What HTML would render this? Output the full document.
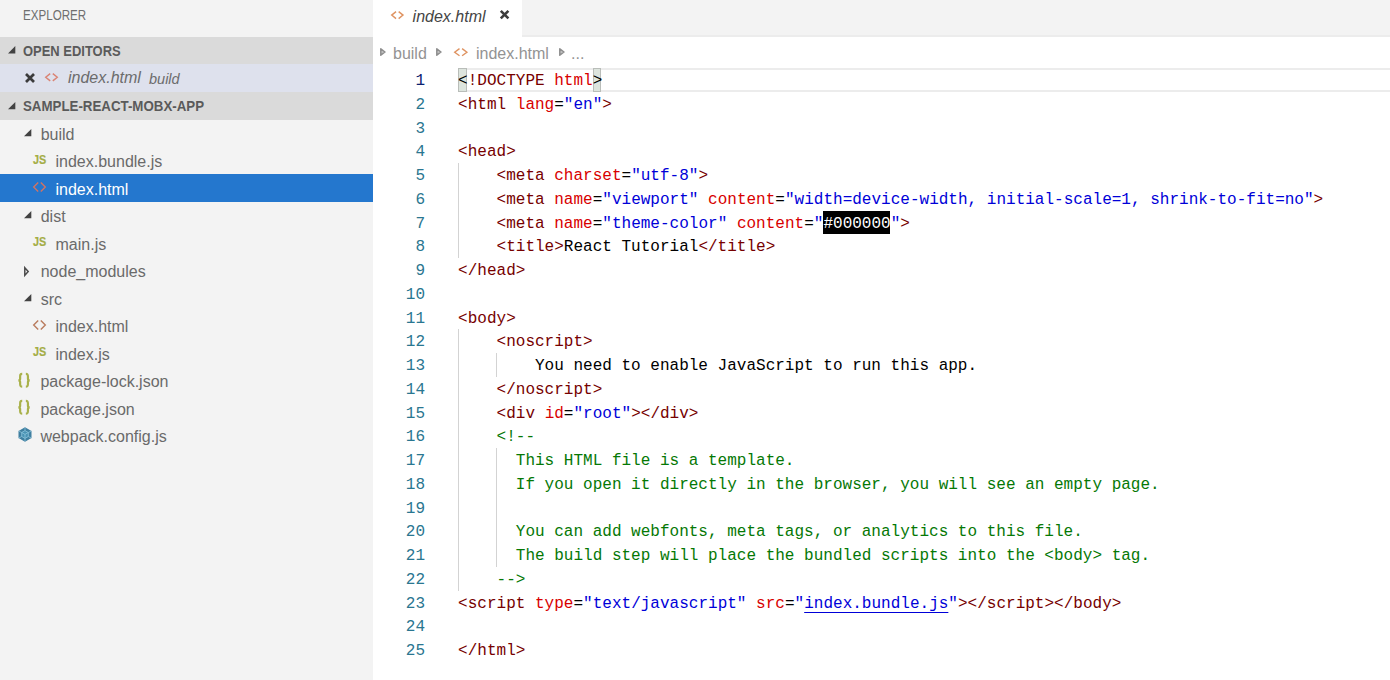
<!DOCTYPE html>
<html><head><meta charset="utf-8">
<style>
*{margin:0;padding:0;box-sizing:border-box}
html,body{width:1390px;height:680px;overflow:hidden;background:#fff;font-family:"Liberation Sans",sans-serif}
.abs{position:absolute}
svg{position:absolute;overflow:visible}
#side{position:absolute;left:0;top:0;width:373px;height:680px;background:#f3f3f3}
.title{left:23px;top:8px;font-size:13.8px;color:#6f6f6f;transform:scaleX(0.84);transform-origin:0 0}
.hdr{left:0;width:373px;background:#dadada}
.hdr span{position:absolute;left:23px;font-size:14px;font-weight:bold;color:#5a5a5a;transform-origin:0 0;white-space:nowrap}
.row{left:0;width:373px;height:27.5px}
.row .t{position:absolute;top:6.2px;font-size:16px;color:#6a6a6a;white-space:nowrap}
.sel{background:#2477ce;margin-top:-0.6px;height:27.85px!important}
.sel .t{margin-top:0.6px}
.sel svg{margin-top:0.6px}
.sel .t{color:#fff}
.jsi{font-size:13.6px;font-weight:bold;color:#a4ad46;transform:scaleX(0.8);transform-origin:0 0;-webkit-text-stroke:0.2px #a4ad46}
#tabs{position:absolute;left:373px;top:0;width:1017px;height:37px;background:#f3f3f3;border-bottom:2px solid #ececec}
#tab{position:absolute;left:373px;top:0;width:149px;height:37px;background:#fff}
.code{position:absolute;left:458.1px;font-family:"Liberation Mono",monospace;font-size:16.03px;white-space:pre;color:#000;height:23.75px;line-height:23.75px}
.ln{position:absolute;left:380px;width:45px;text-align:right;font-family:"Liberation Mono",monospace;font-size:16px;color:#2a7690;height:23.75px;line-height:23.75px}
.ln.act{color:#0b216f}
.tg{color:#760000}
.at{color:#d80000}
.vl{color:#0000d8}
.cm{color:#057805}
.lk{color:#0000d8;text-decoration:underline;text-underline-offset:3.5px;text-decoration-thickness:1px}
.hl{color:#fff}
.bm{}
.bmb{position:absolute;top:68px;width:8.5px;height:23.75px;background:#dde5de;border:1px solid #b9bdb9}
.guide{position:absolute;width:1px;background:#d3d3d3}
#curline{position:absolute;left:458px;top:68px;width:932px;height:23.9px;border-top:2.6px solid #ececec;border-bottom:2.6px solid #ececec}
.bc{position:absolute;top:7.6px;font-size:16px;color:#939393;white-space:nowrap}
</style></head><body>
<div id="side">
  <div class="abs title">EXPLORER</div>
  <div class="abs hdr" style="top:37.3px;height:26.8px"><svg style="left:8px;top:8.8px" width="8" height="8"><path d="M7.3 0 L7.3 7.5 L0 7.5 Z" fill="#424242"/></svg><span style="top:5.3px;transform:scaleX(0.925)">OPEN EDITORS</span></div>
  <div class="abs row" style="top:63.5px;height:29.1px;background:#dee1ed">
    <svg style="left:25px;top:9.7px" width="10" height="10"><path d="M1 1 L9 9 M9 1 L1 9" stroke="#3c3c3c" stroke-width="2.7"/></svg>
    <svg style="left:45px;top:9px" width="13" height="8.5"><path d="M5.20 0.6 L0.7 4.25 L5.20 7.90 M7.80 0.6 L12.30 4.25 L7.80 7.90" fill="none" stroke="#d9735f" stroke-opacity="0.85" stroke-width="1.4"/></svg>
    <div class="t" style="left:68px;font-style:italic;top:5.6px;color:#6c6c6c">index.html</div>
    <div class="t" style="left:149px;font-style:italic;font-size:14.5px;top:7px;color:#6c6c6c">build</div>
  </div>
  <div class="abs hdr" style="top:92.4px;height:27.3px"><svg style="left:8px;top:9.2px" width="8" height="8"><path d="M7.3 0 L7.3 7.2 L0 7.2 Z" fill="#424242"/></svg><span style="top:5.6px;transform:scaleX(0.95)">SAMPLE-REACT-MOBX-APP</span></div>
<div class="abs row" style="top:119.5px"><svg style="left:23.8px;top:9.1px" width="8" height="8"><path d="M7.3 0 L7.3 7.3 L0 7.3 Z" fill="#424242"/></svg><div class="t" style="left:40.7px">build</div></div>
<div class="abs row" style="top:147.0px"><div class="abs jsi" style="left:33.4px;top:4.6px">JS</div><div class="t" style="left:55.5px">index.bundle.js</div></div>
<div class="abs row sel" style="top:174.5px"><svg style="left:33.4px;top:7.6px" width="13" height="10"><path d="M5.20 0.6 L0.7 5 L5.20 9.4 M7.80 0.6 L12.3 5 L7.80 9.4" fill="none" stroke="#d9735f" stroke-opacity="0.95" stroke-width="1.4"/></svg><div class="t" style="left:55.5px">index.html</div></div>
<div class="abs row" style="top:202.0px"><svg style="left:23.8px;top:9.1px" width="8" height="8"><path d="M7.3 0 L7.3 7.3 L0 7.3 Z" fill="#424242"/></svg><div class="t" style="left:40.7px">dist</div></div>
<div class="abs row" style="top:229.5px"><div class="abs jsi" style="left:33.4px;top:4.6px">JS</div><div class="t" style="left:55.5px">main.js</div></div>
<div class="abs row" style="top:257.0px"><svg style="left:24px;top:9.6px" width="6" height="10"><path d="M0.8 0.8 L4.2 4.6 L0.8 8.4 Z" fill="none" stroke="#4a4a4a" stroke-width="1.5" stroke-linejoin="miter"/></svg><div class="t" style="left:40.7px">node_modules</div></div>
<div class="abs row" style="top:284.5px"><svg style="left:23.8px;top:9.1px" width="8" height="8"><path d="M7.3 0 L7.3 7.3 L0 7.3 Z" fill="#424242"/></svg><div class="t" style="left:40.7px">src</div></div>
<div class="abs row" style="top:312.0px"><svg style="left:33.4px;top:7.6px" width="13" height="10"><path d="M5.20 0.6 L0.7 5 L5.20 9.4 M7.80 0.6 L12.3 5 L7.80 9.4" fill="none" stroke="#b67555" stroke-opacity="0.95" stroke-width="1.4"/></svg><div class="t" style="left:55.5px">index.html</div></div>
<div class="abs row" style="top:339.5px"><div class="abs jsi" style="left:33.4px;top:4.6px">JS</div><div class="t" style="left:55.5px">index.js</div></div>
<div class="abs row" style="top:367.0px"><svg style="left:17.3px;top:5.6px" width="14.4" height="14.6" viewBox="0 0 13 14"><path d="M4.6 0.9 C2.7 0.9 2.6 1.8 2.6 3.6 L2.6 5.4 C2.6 6.4 2 7 0.9 7 C2 7 2.6 7.6 2.6 8.6 L2.6 10.4 C2.6 12.2 2.7 13.1 4.6 13.1" fill="none" stroke="#a9b14a" stroke-width="2.1"/><path d="M8.1 0.9 C10 0.9 10.1 1.8 10.1 3.6 L10.1 5.4 C10.1 6.4 10.7 7 11.8 7 C10.7 7 10.1 7.6 10.1 8.6 L10.1 10.4 C10.1 12.2 10 13.1 8.1 13.1" fill="none" stroke="#a9b14a" stroke-width="2.1"/></svg><div class="t" style="left:40.4px">package-lock.json</div></div>
<div class="abs row" style="top:394.5px"><svg style="left:17.3px;top:5.6px" width="14.4" height="14.6" viewBox="0 0 13 14"><path d="M4.6 0.9 C2.7 0.9 2.6 1.8 2.6 3.6 L2.6 5.4 C2.6 6.4 2 7 0.9 7 C2 7 2.6 7.6 2.6 8.6 L2.6 10.4 C2.6 12.2 2.7 13.1 4.6 13.1" fill="none" stroke="#a9b14a" stroke-width="2.1"/><path d="M8.1 0.9 C10 0.9 10.1 1.8 10.1 3.6 L10.1 5.4 C10.1 6.4 10.7 7 11.8 7 C10.7 7 10.1 7.6 10.1 8.6 L10.1 10.4 C10.1 12.2 10 13.1 8.1 13.1" fill="none" stroke="#a9b14a" stroke-width="2.1"/></svg><div class="t" style="left:40.4px">package.json</div></div>
<div class="abs row" style="top:422.0px"><svg style="left:17.7px;top:5.3px" width="14" height="15" viewBox="0 0 14 15"><path d="M7 0.2 L13.5 3.9 L13.5 11.1 L7 14.8 L0.5 11.1 L0.5 3.9 Z" fill="#3f7fa0"/><path d="M7 3.6 L10.3 5.5 L10.3 9.5 L7 11.4 L3.7 9.5 L3.7 5.5 Z" fill="#4a93b4"/><path d="M7 0.8 L7 3.6 M3.7 5.5 L7 7.4 L10.3 5.5 M7 7.4 L7 11.4 M0.8 4 L3.7 5.5 M13.2 4 L10.3 5.5 M7 11.4 L7 14.2 M3.7 9.5 L0.8 11 M10.3 9.5 L13.2 11" fill="none" stroke="#8cc4dc" stroke-width="0.8"/><path d="M7 3.6 L10.3 5.5 L10.3 9.5 L7 11.4 L3.7 9.5 L3.7 5.5 Z" fill="none" stroke="#8cc4dc" stroke-width="0.8"/></svg><div class="t" style="left:40.4px">webpack.config.js</div></div>
</div>
<div id="tabs"></div>
<div id="tab">
  <svg style="left:17.7px;top:10.9px" width="12.7" height="8.2"><path d="M5.05 0.6 L0.7 4.10 L5.05 7.60 M7.65 0.6 L12.00 4.10 L7.65 7.60" fill="none" stroke="#dc8750" stroke-opacity="0.9" stroke-width="1.4"/></svg>
  <div class="abs" style="left:39.6px;top:8.4px;font-size:16px;font-style:italic;color:#454545">index.html</div>
  <svg style="left:126.5px;top:10.4px" width="9" height="9"><path d="M0.8 0.8 L8.4 8.4 M8.4 0.8 L0.8 8.4" stroke="#3c3c3c" stroke-width="2.6"/></svg>
</div>
<div class="abs" style="left:373px;top:37px;width:1017px;height:31px;background:#fff">
  <svg style="left:7px;top:10.8px" width="6" height="8"><path d="M0.8 0.8 L5 4 L0.8 7.2 Z" fill="#c4c4c4" stroke="#8e8e8e" stroke-width="1.5" stroke-linejoin="round"/></svg>
  <div class="bc" style="left:20px">build</div>
  <svg style="left:63px;top:10.8px" width="6" height="8"><path d="M0.8 0.8 L5 4 L0.8 7.2 Z" fill="#c4c4c4" stroke="#8e8e8e" stroke-width="1.5" stroke-linejoin="round"/></svg>
  <svg style="left:81px;top:11.0px" width="13.6" height="8.4"><path d="M5.50 0.6 L0.7 4.20 L5.50 7.80 M8.10 0.6 L12.90 4.20 L8.10 7.80" fill="none" stroke="#dc8750" stroke-opacity="0.9" stroke-width="1.4"/></svg>
  <div class="bc" style="left:103px">index.html</div>
  <svg style="left:185.5px;top:10.8px" width="6" height="8"><path d="M0.8 0.8 L5 4 L0.8 7.2 Z" fill="#c4c4c4" stroke="#8e8e8e" stroke-width="1.5" stroke-linejoin="round"/></svg>
  <div class="bc" style="left:198px">...</div>
</div>
<div id="curline"></div>
<div class="abs" style="left:823px;top:210.50px;width:67.3px;height:23.75px;background:#000"></div>
<div class="bmb" style="left:458.1px"></div>
<div class="bmb" style="left:592.9px"></div>
<div class="ln act" style="top:70.00px">1</div>
<div class="code" style="top:70.00px"><span class="bm">&lt;</span><span class="tg">!DOCTYPE</span> <span class="at">html</span><span class="bm">&gt;</span></div>
<div class="ln" style="top:93.75px">2</div>
<div class="code" style="top:93.75px"><span class="tg">&lt;html</span> <span class="at">lang</span>=<span class="vl">"en"</span><span class="tg">&gt;</span></div>
<div class="ln" style="top:117.50px">3</div>
<div class="code" style="top:117.50px"></div>
<div class="ln" style="top:141.25px">4</div>
<div class="code" style="top:141.25px"><span class="tg">&lt;head&gt;</span></div>
<div class="ln" style="top:165.00px">5</div>
<div class="code" style="top:165.00px">    <span class="tg">&lt;meta</span> <span class="at">charset</span>=<span class="vl">"utf-8"</span><span class="tg">&gt;</span></div>
<div class="ln" style="top:188.75px">6</div>
<div class="code" style="top:188.75px">    <span class="tg">&lt;meta</span> <span class="at">name</span>=<span class="vl">"viewport"</span> <span class="at">content</span>=<span class="vl">"width=device-width, initial-scale=1, shrink-to-fit=no"</span><span class="tg">&gt;</span></div>
<div class="ln" style="top:212.50px">7</div>
<div class="code" style="top:212.50px">    <span class="tg">&lt;meta</span> <span class="at">name</span>=<span class="vl">"theme-color"</span> <span class="at">content</span>=<span class="vl">"</span><span class="hl">#000000</span><span class="vl">"</span><span class="tg">&gt;</span></div>
<div class="ln" style="top:236.25px">8</div>
<div class="code" style="top:236.25px">    <span class="tg">&lt;title&gt;</span>React Tutorial<span class="tg">&lt;/title&gt;</span></div>
<div class="ln" style="top:260.00px">9</div>
<div class="code" style="top:260.00px"><span class="tg">&lt;/head&gt;</span></div>
<div class="ln" style="top:283.75px">10</div>
<div class="code" style="top:283.75px"></div>
<div class="ln" style="top:307.50px">11</div>
<div class="code" style="top:307.50px"><span class="tg">&lt;body&gt;</span></div>
<div class="ln" style="top:331.25px">12</div>
<div class="code" style="top:331.25px">    <span class="tg">&lt;noscript&gt;</span></div>
<div class="ln" style="top:355.00px">13</div>
<div class="code" style="top:355.00px">        You need to enable JavaScript to run this app.</div>
<div class="ln" style="top:378.75px">14</div>
<div class="code" style="top:378.75px">    <span class="tg">&lt;/noscript&gt;</span></div>
<div class="ln" style="top:402.50px">15</div>
<div class="code" style="top:402.50px">    <span class="tg">&lt;div</span> <span class="at">id</span>=<span class="vl">"root"</span><span class="tg">&gt;&lt;/div&gt;</span></div>
<div class="ln" style="top:426.25px">16</div>
<div class="code" style="top:426.25px">    <span class="cm">&lt;!--</span></div>
<div class="ln" style="top:450.00px">17</div>
<div class="code" style="top:450.00px">      <span class="cm">This HTML file is a template.</span></div>
<div class="ln" style="top:473.75px">18</div>
<div class="code" style="top:473.75px">      <span class="cm">If you open it directly in the browser, you will see an empty page.</span></div>
<div class="ln" style="top:497.50px">19</div>
<div class="code" style="top:497.50px"></div>
<div class="ln" style="top:521.25px">20</div>
<div class="code" style="top:521.25px">      <span class="cm">You can add webfonts, meta tags, or analytics to this file.</span></div>
<div class="ln" style="top:545.00px">21</div>
<div class="code" style="top:545.00px">      <span class="cm">The build step will place the bundled scripts into the &lt;body&gt; tag.</span></div>
<div class="ln" style="top:568.75px">22</div>
<div class="code" style="top:568.75px">    <span class="cm">--&gt;</span></div>
<div class="ln" style="top:592.50px">23</div>
<div class="code" style="top:592.50px"><span class="tg">&lt;script</span> <span class="at">type</span>=<span class="vl">"text/javascript"</span> <span class="at">src</span>=<span class="vl">"</span><span class="lk">index.bundle.js</span><span class="vl">"</span><span class="tg">&gt;&lt;/script&gt;&lt;/body&gt;</span></div>
<div class="ln" style="top:616.25px">24</div>
<div class="code" style="top:616.25px"></div>
<div class="ln" style="top:640.00px">25</div>
<div class="code" style="top:640.00px"><span class="tg">&lt;/html&gt;</span></div>
<div class="guide" style="left:458.0px;top:163.00px;height:95.00px"></div>
<div class="guide" style="left:458.0px;top:329.25px;height:261.25px"></div>
<div class="guide" style="left:496.4px;top:353.00px;height:23.75px"></div>
<div class="guide" style="left:496.4px;top:448.00px;height:118.75px"></div>
</body></html>
